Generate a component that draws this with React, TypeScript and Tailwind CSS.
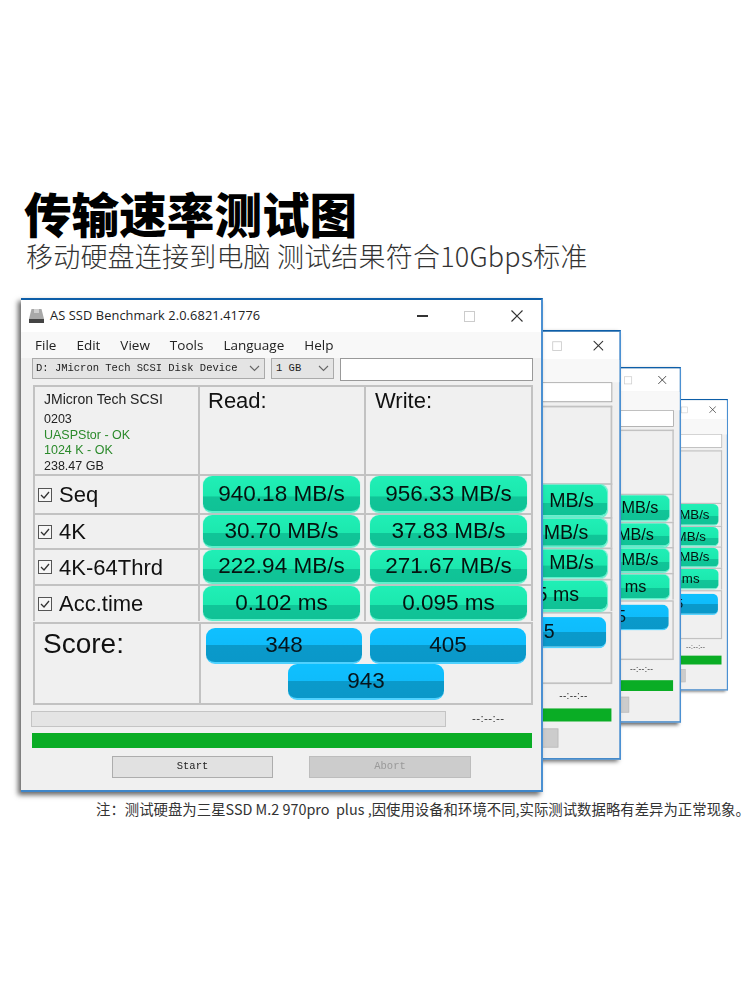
import React from 'react';

const Metric = ({ value }: { value: string }) => (
  <div className="flex h-full w-[157px] items-center justify-center rounded-[9px] border-b-2 border-[#5ff0cc] bg-[linear-gradient(180deg,#20efb6_0%,#1ce8ae_58%,#10c598_59%,#10c296_100%)] text-[22.500px] text-[#06120f] shadow-[0_0_1px_#5ff0cc]">
    {value}
  </div>
);

const ScorePill = ({ value }: { value: string }) => (
  <div className="flex h-[36px] w-[156px] items-center justify-center rounded-[9px] border-b-2 border-[#4fd2ff] bg-[linear-gradient(180deg,#0fc0ff_0%,#0fbcfb_50%,#0a9acb_51%,#0a98c9_100%)] text-[22.500px] text-[#06151c]">
    {value}
  </div>
);

const Check = () => (
  <svg width="14" height="14" viewBox="0 0 14 14" className="shrink-0">
    <rect x="0.5" y="0.5" width="13" height="13" fill="#f6f6f6" stroke="#555" />
    <path d="M3 7l3 3 5-6" fill="none" stroke="#333" strokeWidth="1.3" />
  </svg>
);

const Chevron = () => (
  <svg width="11" height="7" viewBox="0 0 11 7" className="shrink-0">
    <path d="M1 1l4.500 4.500L10 1" fill="none" stroke="#666" strokeWidth="1.1" />
  </svg>
);

const rows = [
  { label: 'Seq', read: '940.18 MB/s', write: '956.33 MB/s', h: 'h-[39px]' },
  { label: '4K', read: '30.70 MB/s', write: '37.83 MB/s', h: 'h-[35px]' },
  { label: '4K-64Thrd', read: '222.94 MB/s', write: '271.67 MB/s', h: 'h-[36px]' },
  { label: 'Acc.time', read: '0.102 ms', write: '0.095 ms', h: 'h-[37px]' },
];

const BenchWindow = ({ className }: { className: string }) => (
  <div
    className={`absolute flex h-[494px] w-[522px] flex-col overflow-hidden border-t-2 border-r-2 border-b-2 border-t-[#0d5ea8] border-r-[#4b90d2] border-b-[#3f86c9] bg-[#f0f0f0] shadow-[-3px_3px_5px_rgba(0,0,0,0.6)] ${className}`}
  >
    {/* Title bar */}
    <div className="flex h-[32px] shrink-0 items-center bg-white pl-[7px] text-[#222]">
      <svg width="17" height="16" viewBox="0 0 17 16" className="shrink-0">
        <path d="M3.500 1h10l2.500 10H1z" fill="#a8a8a8" />
        <path d="M6 1h5v4H6z" fill="#cfcfcf" />
        <rect x="1" y="11" width="15" height="4" fill="#444" />
      </svg>
      <span className="ml-[5px] font-['Open_Sans',sans-serif] text-[12.800px] tracking-[0.1px]">
        AS SSD Benchmark 2.0.6821.41776
      </span>
      <div className="ml-auto flex items-center gap-[36px] pr-[18px]">
        <div className="h-[1.500px] w-[11px] bg-[#333]" />
        <div className="h-[11px] w-[11px] border border-[#ccc]" />
        <svg width="12" height="12" viewBox="0 0 12 12">
          <path d="M0.500 0.500l11 11M11.500 0.500l-11 11" stroke="#333" strokeWidth="1.200" />
        </svg>
      </div>
    </div>

    {/* Menu */}
    <div className="flex h-[26px] shrink-0 items-center gap-[20px] bg-[#f8f8f8] pl-[14px] font-['Open_Sans',sans-serif] text-[13.500px] text-[#222]">
      <span>File</span>
      <span>Edit</span>
      <span>View</span>
      <span>Tools</span>
      <span>Language</span>
      <span>Help</span>
    </div>

    {/* Drive selectors */}
    <div className="flex shrink-0 items-start pl-[11px] font-['Liberation_Mono',monospace] text-[10.500px] text-[#222]">
      <div className="flex h-[21px] w-[233px] items-center justify-between border border-[#aaa] bg-[#e4e4e4] pl-[3px] pr-[4px]">
        <span>D: JMicron Tech SCSI Disk Device</span>
        <Chevron />
      </div>
      <div className="ml-[6px] flex h-[21px] w-[63px] items-center justify-between border border-[#aaa] bg-[#e4e4e4] pl-[4px] pr-[4px]">
        <span>1 GB</span>
        <Chevron />
      </div>
      <div className="ml-[6px] h-[23px] w-[193px] border border-[#999] bg-white" />
    </div>

    {/* Results table */}
    <div className="ml-[12px] mt-[4px] w-[500px] shrink-0 font-['Liberation_Sans',sans-serif] text-[#111]">
      <div className="flex h-[89px] border-2 border-b-0 border-[#c2c2c2]">
        <div className="w-[165px] border-r-2 border-[#c2c2c2] pl-[9px] pt-[3px] text-[12.500px] leading-[15.500px] text-[#222]">
          <div className="mb-[4px] text-[14px] leading-[18px]">JMicron Tech SCSI</div>
          <div>0203</div>
          <div className="text-[#2b8a2b]">UASPStor - OK</div>
          <div className="text-[#2b8a2b]">1024 K - OK</div>
          <div>238.47 GB</div>
        </div>
        <div className="w-[166px] border-r-2 border-[#c2c2c2] pl-[8px] pt-[1px] text-[22px] leading-[26px]">Read:</div>
        <div className="pl-[9px] pt-[1px] text-[22px] leading-[26px]">Write:</div>
      </div>
      {rows.map((row) => (
        <div key={row.label} className={`flex border-x-2 border-t-2 border-[#c2c2c2] ${row.h}`}>
          <div className="flex w-[165px] items-center gap-[7px] border-r-2 border-[#c2c2c2] pl-[3px] text-[22px]">
            <Check />
            <span>{row.label}</span>
          </div>
          <div className="flex w-[166px] justify-center border-r-2 border-[#c2c2c2] pr-[1px]">
            <Metric value={row.read} />
          </div>
          <div className="flex flex-1 justify-center">
            <Metric value={row.write} />
          </div>
        </div>
      ))}
      <div className="mt-[1px] flex h-[83px] border-2 border-[#c2c2c2]">
        <div className="w-[166px] border-r-2 border-[#c2c2c2] pl-[8px] pt-[3px] text-[28px] leading-[34px]">Score:</div>
        <div className="flex flex-1 flex-col items-center pt-[4px]">
          <div className="flex gap-[8px]">
            <ScorePill value="348" />
            <ScorePill value="405" />
          </div>
          <ScorePill value="943" />
        </div>
      </div>
    </div>

    {/* Progress */}
    <div className="ml-[10px] mt-[5px] flex shrink-0 items-center">
      <div className="h-[16px] w-[415px] border border-[#c4c4c4] bg-[#e4e4e4]" />
      <span className="ml-[26px] font-['Liberation_Sans',sans-serif] text-[11.500px] tracking-[0.4px] text-[#333]">--:--:--</span>
    </div>
    <div className="ml-[11px] mt-[6px] h-[15px] w-[500px] shrink-0 bg-[#0aad25]" />

    {/* Buttons */}
    <div className="ml-[91px] mt-[8px] flex shrink-0 gap-[36px] font-['Liberation_Mono',monospace] text-[10.500px]">
      <div className="flex h-[22px] w-[161px] items-center justify-center border border-[#adadad] bg-[#e1e1e1] text-[#222]">
        Start
      </div>
      <div className="flex h-[22px] w-[162px] items-center justify-center border border-[#bdbdbd] bg-[#cccccc] text-[#999]">
        Abort
      </div>
    </div>
  </div>
);

export default function App() {
  return (
    <div className="h-[1000px] w-[750px] overflow-hidden bg-white font-['Noto_Sans_CJK_SC',sans-serif]">
      <div className="flex flex-col pl-[24px] pt-[183px]">
        <h1 className="text-[47.600px] font-black leading-[60px] text-black">传输速率测试图</h1>
        <p className="ml-[2px] mt-[-5px] text-[27px] font-light leading-[36px] tracking-[0.2px] text-[#333]">
          移动硬盘连接到电脑 测试结果符合10Gbps标准
        </p>
      </div>

      <div className="relative h-[526px]">
        {/* back windows first, each one a smaller copy anchored top right */}
        <BenchWindow className="left-[206px] top-[125px] origin-top-right scale-[0.59]" />
        <BenchWindow className="left-[159px] top-[93px] origin-top-right scale-[0.72]" />
        <BenchWindow className="left-[99px] top-[56px] origin-top-right scale-[0.87]" />
        <BenchWindow className="left-[21px] top-[24px]" />
      </div>

      <p className="whitespace-nowrap pl-[96px] text-[14.400px] leading-[18px] text-[#333]">
        注：测试硬盘为三星SSD M.2 970pro&nbsp;&nbsp;plus ,因使用设备和环境不同,实际测试数据略有差异为正常现象。
      </p>
    </div>
  );
}
